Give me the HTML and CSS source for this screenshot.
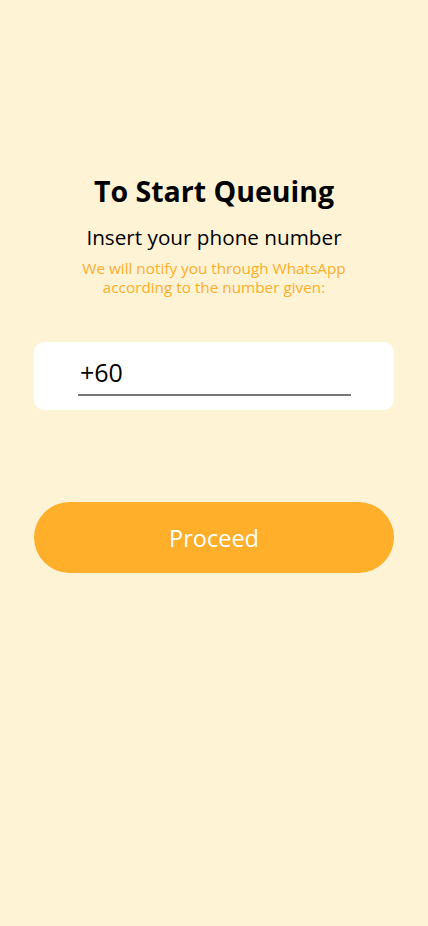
FILE: index.html
```html
<!DOCTYPE html>
<html lang="en">
<head>
    <meta charset="UTF-8">
    <meta name="viewport" content="width=device-width, initial-scale=1.0">
    <title>Start Queuing</title>
    <link rel="stylesheet" href="styles.css">
</head>
<body>

    <div class="container">
        <h1>To Start Queuing</h1>
        <h2>Insert your phone number</h2>
        <p class="note">We will notify you through WhatsApp<br>according to the number given:</p>

        <div class="phone-card">
            <input type="tel" id="phone" value="+60">
        </div>

        <button class="proceed-btn">Proceed</button>
    </div>

</body>
</html>
```

FILE: styles.css
```css
body {
    font-family: "Open Sans", "Noto Sans", sans-serif;
    background-color: #fff3d6;
    margin: 0;
    padding: 0;
    text-align: center;
}
.container {
    padding: 174px 34px 0;
}
h1 {
    font-size: 28.5px;
    font-weight: bold;
    margin: 0;
    line-height: 34px;
    color: #000;
}
h2 {
    font-size: 20.7px;
    font-weight: normal;
    margin: 15px 0 0;
    line-height: 28px;
    color: #000;
}
.note {
    font-size: 15.3px;
    color: #ffae2a;
    margin: 8px 0 0;
    line-height: 19px;
}
.phone-card {
    background: white;
    border-radius: 10px;
    height: 68px;
    margin-top: 45px;
    padding: 15px 43px 0 44px;
    box-sizing: border-box;
}
.phone-card input {
    width: 100%;
    height: 39px;
    border: none;
    border-bottom: 2px solid #777;
    outline: none;
    font-family: inherit;
    font-size: 25px;
    line-height: 30px;
    padding: 0 2px 7px;
    background: transparent;
    box-sizing: border-box;
}
.proceed-btn {
    display: block;
    width: 100%;
    height: 71px;
    margin-top: 92px;
    background: #ffaf2a;
    color: white;
    border: none;
    border-radius: 36px;
    font-family: inherit;
    font-size: 23.5px;
    cursor: pointer;
}
```
